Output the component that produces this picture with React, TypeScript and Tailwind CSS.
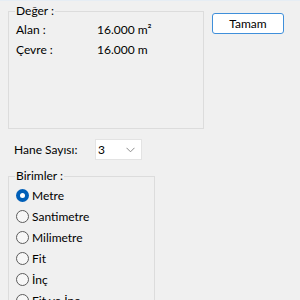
import React from "react";

function Radio({ label, checked }: { label: string; checked?: boolean }) {
  return (
    <div className="flex h-[21px] items-center">
      {checked ? (
        <span className="box-border flex h-[13px] w-[13px] items-center justify-center rounded-full bg-[#005fb8]">
          <span className="h-[5px] w-[5px] rounded-full bg-white" />
        </span>
      ) : (
        <span className="box-border h-[13px] w-[13px] rounded-full border border-[#5c5c5c] bg-[#f7f7f7]" />
      )}
      <span className="ml-[3px] leading-4">{label}</span>
    </div>
  );
}

export default function App() {
  return (
    <div
      className="relative h-[300px] w-[300px] overflow-hidden bg-[#f0f0f0] text-[12px] text-black"
      style={{ fontFamily: 'Lato, "Noto Sans", sans-serif' }}
    >
      <div className="h-px w-full bg-[#e6edf4]" />
      <div className="flex pl-2 pt-[2px]">
        <fieldset className="m-0 box-border h-[126px] w-[196px] border border-[#dcdcdc] pl-[7px] pr-0 pb-0">
          <legend className="ml-[-1px] px-[1px] leading-4">Değer :</legend>
          <div className="mt-[3px] flex flex-col gap-1">
            <div className="flex leading-4">
              <span className="w-[81px]">Alan :</span>
              <span>16.000 m²</span>
            </div>
            <div className="flex leading-4">
              <span className="w-[81px]">Çevre :</span>
              <span>16.000 m</span>
            </div>
          </div>
        </fieldset>
        <button className="ml-2 mt-[10px] box-border flex h-[21px] w-[72px] items-center justify-center rounded-[3px] border border-[#3f8fda] bg-white leading-4 text-black">
          Tamam
        </button>
      </div>
      <div className="mt-[10px] flex items-center pl-[14px]">
        <span className="w-[81px] leading-4">Hane Sayısı:</span>
        <div className="box-border flex h-[21px] w-[47px] items-center justify-between border border-[#e3e3e3] bg-white pl-[2px] pr-[6px]">
          <span className="leading-4">3</span>
          <svg width="9" height="6" viewBox="0 0 9 6" fill="none">
            <path d="M0.5 0.8 L4.5 4.8 L8.5 0.8" stroke="#8a8a8a" strokeWidth="1" />
          </svg>
        </div>
      </div>
      <div className="mt-[8px] pl-2">
        <fieldset className="m-0 box-border h-[200px] w-[147px] border border-[#dcdcdc] pl-[7px] pr-0 pb-0">
          <legend className="ml-[-1px] px-[1px] leading-4">Birimler :</legend>
          <div className="mt-[1px] flex flex-col">
            <Radio label="Metre" checked />
            <Radio label="Santimetre" />
            <Radio label="Milimetre" />
            <Radio label="Fit" />
            <Radio label="İnç" />
            <Radio label="Fit ve İnç" />
          </div>
        </fieldset>
      </div>
    </div>
  );
}
